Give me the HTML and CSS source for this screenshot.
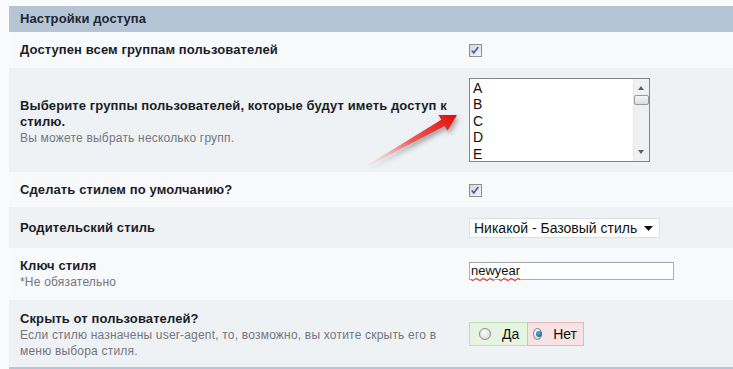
FILE: index.html
```html
<!DOCTYPE html>
<html lang="ru">

<head>
  <meta charset="UTF-8">
  <meta name="viewport" content="width=device-width, initial-scale=1.0">
  <title>Настройки доступа</title>
  <link rel="stylesheet" href="styles.css">
</head>

<body>
  <div class="options_panel">
    <div class="panel_head">Настройки доступа</div>

    <div class="opt_row alt1 h36">
      <div class="opt_label"><b>Доступен всем группам пользователей</b></div>
      <div class="opt_control">
        <span class="check_box">
          <svg width="13" height="13" viewBox="0 0 13 13">
            <path d="M3 6.5l2.2 2.6L10 2.8" fill="none" stroke="#3c5fb0" stroke-width="1.8" />
          </svg>
        </span>
      </div>
    </div>

    <div class="opt_row alt2 h104">
      <div class="opt_label">
        <b>Выберите группы пользователей, которые будут иметь доступ к стилю.</b>
        <span class="desc">Вы можете выбрать несколько групп.</span>
      </div>
      <div class="opt_control">
        <div class="list_box">
          <ul>
            <li>A</li>
            <li>B</li>
            <li>C</li>
            <li>D</li>
            <li>E</li>
          </ul>
          <div class="scroll_bar">
            <span class="arr up"></span>
            <span class="thumb"></span>
            <span class="arr down"></span>
          </div>
        </div>
      </div>
    </div>

    <div class="opt_row alt1 h35">
      <div class="opt_label"><b>Сделать стилем по умолчанию?</b></div>
      <div class="opt_control">
        <span class="check_box">
          <svg width="13" height="13" viewBox="0 0 13 13">
            <path d="M3 6.5l2.2 2.6L10 2.8" fill="none" stroke="#3c5fb0" stroke-width="1.8" />
          </svg>
        </span>
      </div>
    </div>

    <div class="opt_row alt2 h41">
      <div class="opt_label"><b>Родительский стиль</b></div>
      <div class="opt_control">
        <div class="drop_down">
          <span>Никакой - Базовый стиль</span>
          <svg width="9" height="5" viewBox="0 0 9 5"><path d="M0 0h9L4.5 5z" fill="#111" /></svg>
        </div>
      </div>
    </div>

    <div class="opt_row alt1 h52">
      <div class="opt_label">
        <b>Ключ стиля</b>
        <span class="desc">*Не обязательно</span>
      </div>
      <div class="opt_control">
        <div class="text_input"><span class="spell">newyear</span></div>
      </div>
    </div>

    <div class="opt_row alt2 h67">
      <div class="opt_label">
        <b>Скрыть от пользователей?</b>
        <span class="desc">Если стилю назначены user-agent, то, возможно, вы хотите скрыть его в меню выбора стиля.</span>
      </div>
      <div class="opt_control">
        <div class="yes_no">
          <label class="yes"><span class="radio"></span>Да</label>
          <label class="no"><span class="radio on"></span>Нет</label>
        </div>
      </div>
    </div>

    <svg class="red_arrow" width="110" height="82" viewBox="0 0 110 82">
      <defs>
        <linearGradient id="arrowFill" x1="0" y1="1" x2="1" y2="0">
          <stop offset="0" stop-color="#f6c4c4" stop-opacity="0.15" />
          <stop offset="0.5" stop-color="#ee5a5a" />
          <stop offset="1" stop-color="#e00d0d" />
        </linearGradient>
        <filter id="arrowShadow" x="-20%" y="-20%" width="140%" height="160%">
          <feDropShadow dx="2" dy="3" stdDeviation="2.5" flood-color="#000" flood-opacity="0.35" />
        </filter>
      </defs>
      <path d="M10.7 70.4 L85.3 24.8 L82.5 20 L101 20 L91.5 35.8 L88.7 31 L11.3 71.6 Z" fill="url(#arrowFill)" filter="url(#arrowShadow)" />
    </svg>
  </div>
</body>

</html>
```

FILE: styles.css
```css
* {
  box-sizing: border-box;
}

body {
  margin: 0;
  background: #fafbfc;
  font-family: 'Liberation Sans', Arial, sans-serif;
  color: #1c1f2a;
}

.options_panel {
  position: relative;
  margin: 6px 0 0 9px;
  border-bottom: 2px solid #b6c5d5;
}

.panel_head {
  height: 26px;
  line-height: 26px;
  padding-left: 11px;
  background: #b6c5d5;
  font-size: 13px;
  font-weight: bold;
  color: #1f2533;
  letter-spacing: 0.1px;
}

.opt_row {
  display: grid;
  grid-template-columns: 460px 1fr;
  align-items: center;
}

.alt1 {
  background: #f8f9fb;
}

.alt2 {
  background: #eff2f5;
}

.h36 { height: 36px; }
.h104 { height: 104px; }
.h35 { height: 35px; }
.h41 { height: 41px; }
.h52 { height: 52px; }
.h67 { height: 67px; }

.opt_label {
  padding: 0 10px 0 11px;
  font-size: 13px;
  line-height: 16px;
}

.opt_label b {
  display: block;
  color: #1a1d28;
  letter-spacing: 0.1px;
}

.h104 .opt_label {
  padding-top: 3px;
}

.h67 .opt_label {
  padding-top: 2px;
}

.desc {
  display: block;
  font-size: 12px;
  line-height: 16px;
  color: #73767f;
  letter-spacing: 0.2px;
}

.opt_control {
  display: flex;
  align-items: center;
}

.check_box {
  width: 13px;
  height: 13px;
  border: 1px solid #8e8f8f;
  background: linear-gradient(135deg, #d8d8d8, #f4f4f4);
  display: flex;
  margin-top: 1px;
}

.check_box svg {
  margin: -1px 0 0 -1px;
}

.list_box {
  display: flex;
  width: 181px;
  height: 84px;
  border: 1px solid #828790;
  background: #fff;
  margin-top: -1px;
}

.list_box ul {
  list-style: none;
  margin: 0;
  padding: 1px 0 0 3px;
  flex: 1;
  font-size: 14px;
  line-height: 16.5px;
  color: #1a0a0a;
}

.scroll_bar {
  width: 16px;
  background: #f0f0f0;
  border-left: 1px solid #e6e6e6;
  position: relative;
}

.scroll_bar .arr {
  position: absolute;
  left: 4px;
  width: 0;
  height: 0;
  border-left: 3.5px solid transparent;
  border-right: 3.5px solid transparent;
}

.scroll_bar .up {
  top: 7px;
  border-bottom: 4px solid #606060;
}

.scroll_bar .down {
  bottom: 7px;
  border-top: 4px solid #606060;
}

.scroll_bar .thumb {
  position: absolute;
  top: 16px;
  left: 0;
  width: 15px;
  height: 10px;
  border: 1px solid #9a9a9a;
  border-radius: 2px;
  background: linear-gradient(#f6f6f6, #dcdcdc);
}

.drop_down {
  display: flex;
  align-items: center;
  justify-content: space-between;
  width: 191px;
  height: 20px;
  padding: 0 6px 0 4px;
  background: #fff;
  border: 1px solid #dcdfe3;
  font-size: 14px;
  color: #111;
  margin-top: 1px;
}

.text_input {
  width: 205px;
  height: 18px;
  border: 1px solid #abadb3;
  border-top-color: #a0a3aa;
  background: #fff;
  font-size: 13px;
  line-height: 16px;
  padding-left: 1px;
  color: #111;
  margin-top: -7px;
}

.spell {
  text-decoration: underline wavy #e02020;
  text-decoration-thickness: 1px;
  text-underline-offset: 2px;
}

.yes_no {
  display: flex;
  height: 24px;
  font-size: 14px;
  color: #111;
  margin-top: 1px;
}

.yes_no label {
  display: flex;
  align-items: center;
  border: 1px solid;
  padding: 0 6px 0 9px;
}

.yes_no .yes {
  width: 58px;
  background: #e5f5e2;
  border-color: #b9e2b2;
  border-right: 0;
}

.yes_no .no {
  width: 57px;
  background: #f7e3e3;
  border-color: #e6b9b9;
  padding-left: 5px;
}

.radio {
  width: 12px;
  height: 12px;
  border-radius: 50%;
  border: 1px solid #8b8b8b;
  background: radial-gradient(circle at 40% 35%, #fff, #d0d0d0);
  margin-right: 11px;
  position: relative;
}

.radio.on::after {
  content: "";
  position: absolute;
  left: 2px;
  top: 2px;
  width: 6px;
  height: 6px;
  border-radius: 50%;
  background: radial-gradient(circle at 40% 35%, #4fb0ea, #0b4f8a);
}

.red_arrow {
  position: absolute;
  left: 347px;
  top: 89px;
  pointer-events: none;
}
```
